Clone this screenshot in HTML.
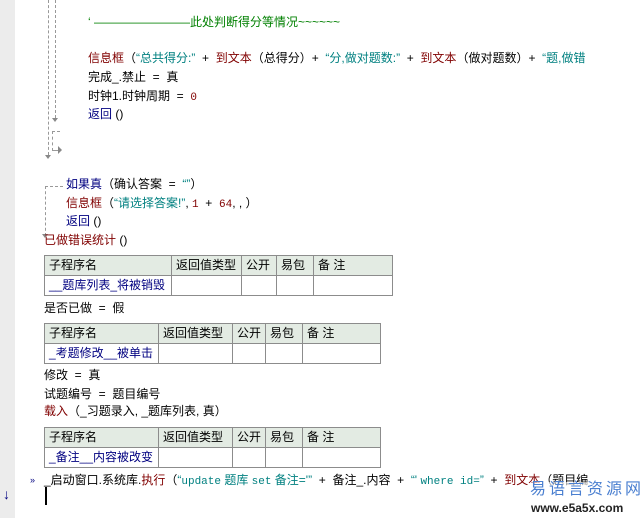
<!DOCTYPE html>
<html><head><meta charset="utf-8"><style>
body{margin:0;width:643px;height:518px;background:#fff;position:relative;overflow:hidden;font-family:"Liberation Sans","Noto Sans CJK SC","WenQuanYi Zen Hei",sans-serif;font-size:12px;color:#000}
.g{position:absolute;left:0;top:0;width:15px;height:518px;background:#ececec}
.l{position:absolute;white-space:pre;line-height:16px}
.r{color:#800000}.b{color:#000080}.t{color:#008080}.gr{color:#008000}.n{color:#800000}
.m{font-family:"Liberation Mono","Noto Sans CJK SC",monospace;font-size:11px}
.vd{position:absolute;border-left:1px dashed #999;width:0}
.hd{position:absolute;border-top:1px dashed #999;height:0}
table{position:absolute;border-collapse:collapse;font-size:12px;table-layout:fixed}
td{border:1px solid #8c8c8c;height:19px;padding:0 0 0 4px;line-height:19px;white-space:nowrap;overflow:hidden}
tr.h td{background:#e3ebe3}
</style></head><body>
<div class="g"></div>
<div class="vd" style="left:48px;top:0;height:155px"></div>
<div class="vd" style="left:55px;top:0;height:118px"></div>
<div style="position:absolute;left:52px;top:118px;border:3px solid transparent;border-top:4px solid #888"></div>
<div class="hd" style="left:52px;top:131px;width:8px"></div>
<div class="vd" style="left:52px;top:131px;height:20px"></div>
<div class="hd" style="left:52px;top:150px;width:6px"></div>
<div style="position:absolute;left:58px;top:146px;border:4px solid transparent;border-left:4px solid #888"></div>
<div style="position:absolute;left:45px;top:155px;border:3px solid transparent;border-top:4px solid #888"></div>
<div class="hd" style="left:45px;top:186px;width:18px"></div>
<div class="vd" style="left:45px;top:186px;height:50px"></div>
<div style="position:absolute;left:42px;top:234px;border:3px solid transparent;border-top:4px solid #888"></div>

<div class="l gr" style="left:88px;top:14px">‘ ————————此处判断得分等情况~~~~~~</div>
<div class="l" style="left:88px;top:50px"><span class="r">信息框</span>（<span class="t">“总共得分:”</span>  +  <span class="r">到文本</span>（总得分）+  <span class="t">“分,做对题数:”</span>  +  <span class="r">到文本</span>（做对题数）+  <span class="t">“题,做错</span></div>
<div class="l" style="left:88px;top:69px">完成_.禁止  =  真</div>
<div class="l" style="left:88px;top:88px">时钟1.时钟周期  =  <span class="n m">0</span></div>
<div class="l b" style="left:88px;top:106px">返回 <span style="color:#000">()</span></div>

<div class="l" style="left:66px;top:176px"><span class="b">如果真</span>（确认答案  =  <span class="t">“”</span>）</div>
<div class="l" style="left:66px;top:195px"><span class="r">信息框</span>（<span class="t">“请选择答案!”</span>, <span class="n m">1</span>  +  <span class="n m">64</span>, , ）</div>
<div class="l" style="left:66px;top:213px"><span class="b">返回</span> ()</div>
<div class="l r" style="left:44px;top:232px">已做错误统计 <span style="color:#000">()</span></div>

<table style="left:44px;top:255px;width:349px"><col style="width:127px"><col style="width:70px"><col style="width:35px"><col style="width:37px"><col><tr class="h"><td>子程序名</td><td>返回值类型</td><td>公开</td><td>易包</td><td>备 注</td></tr><tr><td class="b">__题库列表_将被销毁</td><td></td><td></td><td></td><td></td></tr></table>
<div class="l" style="left:44px;top:300px">是否已做  =  假</div>
<table style="left:44px;top:323px;width:337px"><col style="width:114px"><col style="width:74px"><col style="width:33px"><col style="width:37px"><col><tr class="h"><td>子程序名</td><td>返回值类型</td><td>公开</td><td>易包</td><td>备 注</td></tr><tr><td class="b">_考题修改__被单击</td><td></td><td></td><td></td><td></td></tr></table>
<div class="l" style="left:44px;top:367px">修改  =  真</div>
<div class="l" style="left:44px;top:386px">试题编号  =  题目编号</div>
<div class="l" style="left:44px;top:403px"><span class="r">载入</span>（_习题录入, _题库列表, 真）</div>
<table style="left:44px;top:427px;width:337px"><col style="width:114px"><col style="width:74px"><col style="width:33px"><col style="width:37px"><col><tr class="h"><td>子程序名</td><td>返回值类型</td><td>公开</td><td>易包</td><td>备 注</td></tr><tr><td class="b">_备注__内容被改变</td><td></td><td></td><td></td><td></td></tr></table>

<div class="l" style="left:30px;top:472px;font-size:9px;color:#000080">»</div>
<div class="l" style="left:44px;top:472px">_启动窗口.系统库.<span class="r">执行</span>（<span class="t">“<span class="m">update</span> 题库 <span class="m">set</span> 备注='”</span>  +  备注_.内容  +  <span class="t">“' <span class="m">where id=</span>”</span>  +  <span class="r">到文本</span>（题目编</div>
<div style="position:absolute;left:45px;top:487px;width:2px;height:18px;background:#000"></div>
<div class="l" style="left:3px;top:486px;color:#000080;font-size:14px">↓</div>
<div class="l" style="left:530px;top:482px;color:#4a7fd0;font-size:16px;letter-spacing:3px;background:rgba(255,255,255,.6)">易语言资源网</div>
<div class="l" style="left:431px;top:500px;width:110px;text-align:right;left:430px;color:#222;font-size:12px;font-weight:bold;position:absolute;left:430px"></div>
<div class="l" style="left:531px;top:500px;color:#222;font-size:12px;font-weight:bold">www.e5a5x.com</div>
</body></html>
